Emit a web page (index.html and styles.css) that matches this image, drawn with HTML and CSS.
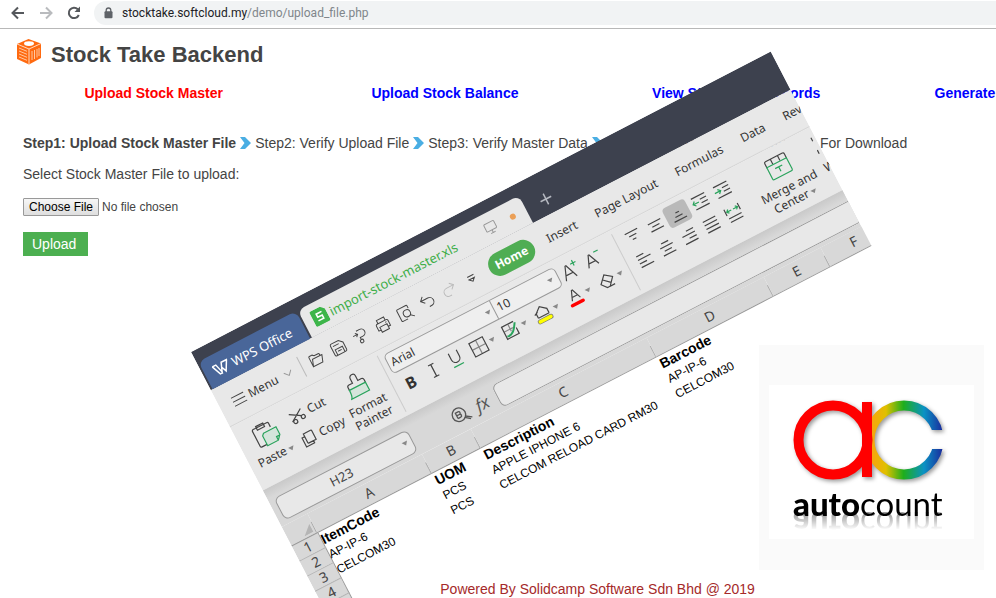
FILE: index.html
```html
<!DOCTYPE html>
<html lang="en">
<head>
    <meta charset="UTF-8">
    <meta name="viewport" content="width=device-width, initial-scale=1.0">
    <title>Stock Take Backend</title>
    <link rel="stylesheet" href="styles.css">
</head>
<body>
    <!-- Browser bar -->
    <div class="browser-bar">
        <button class="bar-btn" aria-label="Back"><svg width="16" height="16" viewBox="0 0 16 16"><path d="M14 8H3M8 2.500L2.500 8L8 13.500"/></svg></button>
        <button class="bar-btn off" aria-label="Forward"><svg width="16" height="16" viewBox="0 0 16 16"><path d="M2 8H13M8 2.500L13.500 8L8 13.500"/></svg></button>
        <button class="bar-btn" aria-label="Reload"><svg width="16" height="16" viewBox="0 0 16 16"><path d="M12.800 10A5.200 5.200 0 1 1 11.800 4.300"/><path class="solid" d="M14 1.500V7H8.500z"/></svg></button>
        <div class="address" role="textbox" aria-label="Address">
            <svg width="9" height="12" viewBox="0 0 9 12"><path d="M2.200 5V3.300a2.300 2.300 0 0 1 4.600 0V5" fill="none" stroke="#5f6368" stroke-width="1.300"/><rect x="0.500" y="4.300" width="8" height="7" rx="1" fill="#5f6368"/></svg>
            <span>stocktake.softcloud.my<span class="path">/demo/upload_file.php</span></span>
        </div>
    </div>

    <div class="page">
        <header>
            <svg class="logo" width="26" height="26" viewBox="0 0 26 26">
                <path d="M12.500 0L25 4.500V19L13 25.500L1 20V5z" fill="#ff6a10"/>
                <path d="M1 5L13 10L25 4.500M13 10V25.500" stroke="#ffd9bf" stroke-width="1" fill="none"/>
                <ellipse cx="13" cy="4.600" rx="5" ry="2.300" fill="#fff"/>
                <path d="M3 9l8 3.300M3 12l8 3.300M3 15l8 3.300M3 18l8 3.300" stroke="#ffc9a3" stroke-width="1"/>
                <path d="M16 12v9M18.500 11v9M21 10v8.500M23 9v8" stroke="#ffc9a3" stroke-width="1"/>
            </svg>
            <h1>Stock Take Backend</h1>
        </header>
        <nav>
            <a href="#" class="active">Upload Stock Master</a>
            <a href="#">Upload Stock Balance</a>
            <a href="#">View Stock Take Records</a>
            <a href="#">Generate File For Download</a>
        </nav>
        <main>
            <div class="steps">
                <b>Step1: Upload Stock Master File</b>
                <svg width="11" height="12" viewBox="0 0 11 12"><path d="M0 0H5L11 6L5 12H0L4.500 6z"/></svg>
                <span>Step2: Verify Upload File</span>
                <svg width="11" height="12" viewBox="0 0 11 12"><path d="M0 0H5L11 6L5 12H0L4.500 6z"/></svg>
                <span>Step3: Verify Master Data</span>
                <svg width="11" height="12" viewBox="0 0 11 12"><path d="M0 0H5L11 6L5 12H0L4.500 6z"/></svg>
                <span>Step4: Generate Master Data File For Download</span>
            </div>
            <form>
                <label for="stockFile">Select Stock Master File to upload:</label>
                <input type="file" id="stockFile">
                <button type="button" class="upload-btn">Upload</button>
            </form>
        </main>
        <footer>Powered By Solidcamp Software Sdn Bhd @ 2019</footer>
    </div>

    <!-- Tilted spreadsheet window -->
    <div class="sheet">
        <div class="title-bar">
            <div class="app-tab">
                <svg width="18" height="14" viewBox="0 0 18 14"><path d="M1 2H5L7.500 11L11 2H17L11.500 12L9 6M1 2L5 12H8" fill="none" stroke="#fff" stroke-width="1.500"/></svg>
                <span>WPS Office</span>
            </div>
            <div class="file-tab">
                <svg width="16" height="17" viewBox="0 0 16 17"><path d="M2 0H12L16 4V15a2 2 0 0 1-2 2H2a2 2 0 0 1-2-2V2a2 2 0 0 1 2-2z" fill="#3db54a"/><path d="M11.500 5H5.500V8.500H10.500V12H4.500" fill="none" stroke="#fff" stroke-width="1.600"/></svg>
                <span class="file-name">import-stock-master.xls</span>
                <svg width="13" height="13" viewBox="0 0 13 13" fill="none" stroke="#999"><rect x="1" y="1" width="11" height="8" rx="1"/><path d="M6.500 9v2.500M4 12h5"/></svg>
                <i class="dot"></i>
            </div>
            <button class="new-tab" aria-label="New tab"><svg width="13" height="13" viewBox="0 0 13 13"><path d="M6.500 0.500V12.500M0.500 6.500H12.500" stroke="#b5b8c0" stroke-width="1.500"/></svg></button>
        </div>

        <div class="menu-bar">
            <button class="menu-btn">
                <svg width="14" height="12" viewBox="0 0 14 12"><path d="M0 1.500H14M0 6H14M0 10.500H14" stroke="#444"/></svg>
                <span>Menu</span>
                <svg class="menu-arrow" width="9" height="6" viewBox="0 0 9 6"><path d="M0.500 0.500L4.500 5L8.500 0.500" fill="none" stroke="#999"/></svg>
            </button>
            <div class="quick">
                <button aria-label="Open"><svg width="16" height="16" viewBox="0 0 16 16"><path d="M2 13.500V3.500a1 1 0 0 1 1-1H6L7.500 4H12a1 1 0 0 1 1 1V6.500M2 13.500L4.500 6.500H15L12.500 13.500z"/></svg></button>
                <button aria-label="Save"><svg width="16" height="16" viewBox="0 0 16 16"><path d="M1.500 3a1.500 1.500 0 0 1 1.500-1.500H11L14.500 5V13a1.500 1.500 0 0 1-1.500 1.500H3A1.500 1.500 0 0 1 1.500 13zM4 14.500V8.500H12V14.500M3.500 4.500H10M6 11H10"/></svg></button>
                <button aria-label="Export"><svg width="16" height="16" viewBox="0 0 16 16"><path d="M1 5H6M4 3L6 5L4 7M6 1.500H10A3.700 3.700 0 0 1 10 9H7V12M7 9V12"/><circle cx="7" cy="13" r="1.800"/></svg></button>
                <button aria-label="Print"><svg width="16" height="16" viewBox="0 0 16 16"><path d="M4 5V1.500H12V5M4 12H1.500V6.500A1.500 1.500 0 0 1 3 5H13A1.500 1.500 0 0 1 14.500 6.500V12H12M4 9H12V14.500H4zM11 7h1.500"/></svg></button>
                <button aria-label="Print preview"><svg width="16" height="16" viewBox="0 0 16 16"><path d="M13 5V2.500A1 1 0 0 0 12 1.500H2.500A1 1 0 0 0 1.500 2.500V13.500A1 1 0 0 0 2.500 14.500H8M12 12L15.500 15"/><circle cx="9.500" cy="9" r="3.600"/></svg></button>
                <button aria-label="Undo"><svg width="16" height="16" viewBox="0 0 16 16"><path d="M5.500 1.500L2 5L5.500 8.500M2 5H10A4 4 0 0 1 10 13.500H8"/></svg></button>
                <button aria-label="Redo" class="off"><svg width="16" height="16" viewBox="0 0 16 16"><path d="M10.500 1.500L14 5L10.500 8.500M14 5H6A4 4 0 0 0 6 13.500H8"/></svg></button>
                <button aria-label="More"><svg width="16" height="16" viewBox="0 0 16 16"><path d="M4.500 5H11.500M5 8L8 11L11 8z"/></svg></button>
            </div>
            <button class="ribbon-tab active">Home</button>
            <button class="ribbon-tab">Insert</button>
            <button class="ribbon-tab">Page Layout</button>
            <button class="ribbon-tab">Formulas</button>
            <button class="ribbon-tab">Data</button>
            <button class="ribbon-tab">Review</button>
        </div>

        <div class="ribbon">
            <div class="group clipboard">
                <button class="tall paste">
                    <svg width="28" height="28" viewBox="0 0 28 28"><path d="M10 24H4.500A1.500 1.500 0 0 1 3 22.500V6A1.500 1.500 0 0 1 4.500 4.500H19.500A1.500 1.500 0 0 1 21 6V10M8 3H16V7H8z"/><path class="green" d="M12 12.500H26V21L22 25.500H10V14.500zM22 25.500V21.500H26"/></svg>
                    <span>Paste <i class="arrow"></i></span>
                </button>
                <div class="stack">
                    <button><svg width="16" height="16" viewBox="0 0 16 16"><path d="M1 3.500L12 10.500M1 12L14 3.500"/><circle cx="13" cy="12" r="2"/><circle cx="4" cy="13" r="2"/></svg>Cut</button>
                    <button><svg width="16" height="16" viewBox="0 0 16 16"><path d="M5 1.500H13A1 1 0 0 1 14 2.500V12H6A1 1 0 0 1 5 11zM5 4.500H2V14.500H11V12"/></svg>Copy</button>
                </div>
                <button class="tall painter">
                    <svg width="24" height="26" viewBox="0 0 24 26"><path d="M3 14V11A2 2 0 0 1 5 9H9V4A3 3 0 0 1 15 4V9H19A2 2 0 0 1 21 11V14"/><path class="green" d="M3 14H21V23H1C3 21 3 18 3 14z"/></svg>
                    <span>Format<br>Painter</span>
                </button>
            </div>
            <div class="group font">
                <div class="row">
                    <div class="combo">
                        <select class="font-name" aria-label="Font"><option>Arial</option></select><i class="arrow"></i>
                        <select class="font-size" aria-label="Font size"><option>10</option></select><i class="arrow"></i>
                    </div>
                    <button class="tool" aria-label="Grow font"><svg width="20" height="20" viewBox="0 0 20 20"><path d="M2 18L7.500 4H8.500L14 18M4 13H12"/><path class="green" d="M13 4.500H19M16 1.500V7.500"/></svg></button>
                    <button class="tool" aria-label="Shrink font"><svg width="20" height="20" viewBox="0 0 20 20"><path d="M3 17L8 5H9L14 17M5 13H12"/><path class="green" d="M14 4.500H19"/></svg></button>
                </div>
                <div class="row">
                    <button class="tool bold">B</button>
                    <button class="tool" aria-label="Italic"><svg width="16" height="18" viewBox="0 0 16 18"><path d="M5 2.500H11M5 15.500H11M8 2.500V15.500"/></svg></button>
                    <button class="tool" aria-label="Underline"><svg width="16" height="18" viewBox="0 0 16 18"><path d="M3.500 1V8A4.500 4.500 0 0 0 12.500 8V1"/><path class="green" d="M2.500 16H13.500"/></svg></button>
                    <button class="tool split" aria-label="Borders"><svg width="18" height="18" viewBox="0 0 18 18"><path class="thin" d="M9 2V16M2 9H16"/><path d="M1.500 1.500H16.500V16.500H1.500z"/></svg><i class="arrow"></i></button>
                    <button class="tool split" aria-label="Cell style"><svg width="18" height="18" viewBox="0 0 18 18"><path class="thin" d="M9 2V10M2 7.500H12"/><path d="M15 2H2V15.500H15V9"/><path class="green thick" d="M3 13C9 14 12 10 16 3.500"/></svg><i class="arrow"></i></button>
                    <button class="tool split" aria-label="Fill color"><svg width="18" height="18" viewBox="0 0 18 18"><path d="M3 11V6L9 1L15 6V11M1 7L5 5M3 11H15"/><path d="M3 15H15" stroke="#777" stroke-width="5" stroke-linecap="round"/><path d="M3 15H15" stroke="#ff0" stroke-width="3.500" stroke-linecap="round"/></svg><i class="arrow"></i></button>
                    <button class="tool split" aria-label="Font color"><svg width="18" height="18" viewBox="0 0 18 18"><path d="M5 11.500L9 1.500H10L14 11.500M6.500 8H12.500"/><path d="M3 15.500H15" stroke="#f00" stroke-width="3.500" stroke-linecap="round"/></svg><i class="arrow"></i></button>
                    <button class="tool split" aria-label="Clear"><svg width="18" height="18" viewBox="0 0 18 18"><path d="M2 10L9 2.500L16 8L9.500 15.500H6.500zM5.500 6.500L12 12.500M9 15.500H15"/></svg><i class="arrow"></i></button>
                </div>
            </div>
            <div class="group align">
                <button aria-label="Top align"><svg width="18" height="18" viewBox="0 0 18 18"><path d="M2 3.500H16M5 7.500H13M7 11.500H11"/></svg></button>
                <button aria-label="Middle align"><svg width="18" height="18" viewBox="0 0 18 18"><path d="M2 5.500H16M5 9.500H13M2 13.500H16"/></svg></button>
                <button aria-label="Bottom align" class="on"><svg width="18" height="18" viewBox="0 0 18 18"><path d="M7 7.500H11M5 11.500H13M2 15.500H16"/></svg></button>
                <button aria-label="Decrease indent"><svg width="18" height="18" viewBox="0 0 18 18"><path d="M2 2.500H17M10 6.500H17M10 10.500H17M2 14.500H17"/><path class="green" d="M8 8.500H1.500M4 6L1.500 8.500L4 11"/></svg></button>
                <button aria-label="Increase indent"><svg width="18" height="18" viewBox="0 0 18 18"><path d="M2 2.500H17M10 6.500H17M10 10.500H17M2 14.500H17"/><path class="green" d="M1 8.500H7.500M5 6L7.500 8.500L5 11"/></svg></button>
                <button aria-label="Align left"><svg width="18" height="18" viewBox="0 0 18 18"><path d="M2 2.500H10M2 6.500H16M2 10.500H10M2 14.500H16"/></svg></button>
                <button aria-label="Center"><svg width="18" height="18" viewBox="0 0 18 18"><path d="M5 2.500H13M2 6.500H16M5 10.500H13M2 14.500H16"/></svg></button>
                <button aria-label="Align right"><svg width="18" height="18" viewBox="0 0 18 18"><path d="M8 2.500H16M2 6.500H16M8 10.500H16M2 14.500H16"/></svg></button>
                <button aria-label="Justify"><svg width="18" height="18" viewBox="0 0 18 18"><path d="M2 2.500H16M2 6.500H16M2 10.500H16M2 14.500H16"/></svg></button>
                <button aria-label="Distribute"><svg width="18" height="18" viewBox="0 0 18 18"><path d="M1.500 1V8M16.500 1V8M2 11.500H16M2 15.500H16"/><path class="green" d="M8 4.500H3M5 2.500L3 4.500L5 6.500M10 4.500H15M13 2.500L15 4.500L13 6.500"/></svg></button>
            </div>
            <button class="tall merge">
                <svg width="26" height="26" viewBox="0 0 26 26"><path d="M2 9V4A1.500 1.500 0 0 1 3.500 2.500H22.500A1.500 1.500 0 0 1 24 4V9M9 3V8M17 3V8"/><path class="green" d="M2 8.500H24V21A1.500 1.500 0 0 1 22.500 22.500H3.500A1.500 1.500 0 0 1 2 21zM9 13H17M13 13V18"/></svg>
                <span>Merge and<br>Center <i class="arrow"></i></span>
            </button>
            <button class="tall wrap">
                <svg width="26" height="26" viewBox="0 0 26 26"><path d="M2 2V6M2 16V20"/></svg>
                <span>Wrap</span>
            </button>
        </div>

        <div class="formula-bar">
            <div class="name-box">
                <input type="text" value="H23" aria-label="Name box"><i class="arrow"></i>
            </div>
            <svg class="find" width="20" height="18" viewBox="0 0 20 18" fill="none" stroke="#555" stroke-width="1.300"><circle cx="8" cy="8" r="6.800"/><path d="M5.500 11V5H8.500A1.500 1.500 0 0 1 8.500 8H5.500M8.500 8A1.500 1.500 0 0 1 8.500 11H5.500M13 12L19 16M12 13L17 17"/></svg>
            <span class="fx">fx</span>
            <input type="text" class="formula" aria-label="Formula">
        </div>

        <table>
            <colgroup>
                <col class="c-num"><col class="c-a"><col class="c-b"><col class="c-c"><col class="c-d"><col class="c-e"><col class="c-f">
            </colgroup>
            <thead>
                <tr>
                    <th class="corner"><svg width="10" height="9" viewBox="0 0 10 9"><path d="M10 0V9H0z" fill="#b5b5b5"/></svg></th>
                    <th>A</th><th>B</th><th>C</th><th>D</th><th>E</th><th>F</th>
                </tr>
            </thead>
            <tbody>
                <tr class="names"><th>1</th><td>ItemCode</td><td>UOM</td><td>Description</td><td>Barcode</td><td></td><td></td></tr>
                <tr><th>2</th><td>AP-IP-6</td><td>PCS</td><td>APPLE IPHONE 6</td><td>AP-IP-6</td><td></td><td></td></tr>
                <tr><th>3</th><td>CELCOM30</td><td>PCS</td><td>CELCOM RELOAD CARD RM30</td><td>CELCOM30</td><td></td><td></td></tr>
                <tr><th>4</th><td></td><td></td><td></td><td></td><td></td><td></td></tr>
                <tr><th></th><td></td><td></td><td></td><td></td><td></td><td></td></tr>
            </tbody>
        </table>
    </div>

    <!-- AutoCount card -->
    <div class="partner">
        <div class="partner-inner">
            <svg width="160" height="88" viewBox="0 0 160 88">
                <defs>
                    <linearGradient id="rainbow" gradientUnits="userSpaceOnUse" x1="76" y1="0" x2="152" y2="0">
                        <stop offset="0" stop-color="#ff9c12"/>
                        <stop offset="0.250" stop-color="#e0c000"/>
                        <stop offset="0.480" stop-color="#1fae1c"/>
                        <stop offset="0.750" stop-color="#0a92c4"/>
                        <stop offset="1" stop-color="#1b2a9c"/>
                    </linearGradient>
                    <clipPath id="gap"><path d="M0 0H160V32H112V51H160V88H0z"/></clipPath>
                </defs>
                <g class="mark">
                    <g clip-path="url(#gap)"><circle cx="113" cy="42" r="34.500" fill="none" stroke="url(#rainbow)" stroke-width="10"/></g>
                    <circle cx="42" cy="42" r="34.500" fill="none" stroke="#f00" stroke-width="10"/>
                    <path d="M71 4H81V79H71z" fill="#f00"/>
                </g>
            </svg>
            <div class="brand"><b>auto</b>count</div>
        </div>
    </div>
</body>
</html>
```
FILE: styles.css
```css
* {
    box-sizing: border-box;
}

html, body {
    height: 100%;
}

body {
    margin: 0;
    display: flex;
    flex-direction: column;
    position: relative;
    overflow: hidden;
    background: #fff;
    color: #444;
    font: 14px/20px 'Liberation Sans', Arial, sans-serif;
}

button {
    border: none;
    background: none;
    padding: 0;
    font: inherit;
    color: inherit;
}

/* Browser bar */
.browser-bar {
    display: flex;
    align-items: center;
    height: 29px;
    flex: none;
    padding: 0 0 3px 10px;
    border-bottom: 1px solid #b8b8b8;
}

.bar-btn {
    width: 28px;
    height: 16px;
    text-align: left;
}

.bar-btn svg {
    display: block;
    fill: none;
    stroke: #55585c;
    stroke-width: 2;
}

.bar-btn.off svg {
    stroke: #b9bbbe;
}

.bar-btn .solid {
    fill: #55585c;
    stroke: none;
}

.address {
    display: flex;
    align-items: center;
    gap: 9px;
    flex: 1;
    height: 24px;
    padding-left: 10px;
    border-radius: 12px 0 0 12px;
    background: #f1f3f4;
    color: #202124;
    font: 12px/24px Roboto, 'Open Sans', sans-serif;
}

.address .path {
    color: #80868b;
}

/* Page */
.page {
    flex: 1;
    display: flex;
    flex-direction: column;
    width: 120%;
}

header {
    display: flex;
    align-items: center;
    gap: 9px;
    padding: 10px 16px 0;
}

header .logo {
    margin-bottom: 6px;
}

h1 {
    margin: 0;
    font-size: 22px;
    line-height: 32px;
}

nav {
    display: grid;
    grid-template-columns: repeat(4, 1fr);
    margin-top: 12px;
    padding: 0 22px 0 8px;
    text-align: center;
}

nav a {
    color: #00f;
    font-weight: bold;
    text-decoration: none;
}

nav a.active {
    color: #f00;
}

main {
    padding: 30px 24px 0 23px;
}

.steps {
    display: flex;
    align-items: center;
    gap: 4px;
    white-space: nowrap;
}

.steps svg {
    fill: #4aaee3;
}

form {
    display: flex;
    flex-direction: column;
    align-items: flex-start;
    margin-top: 11px;
}

input[type="file"] {
    margin: 14px 0 16px;
    font: 12px/18px 'Liberation Sans', Arial, sans-serif;
    color: #444;
}

input[type="file"]::file-selector-button {
    height: 18px;
    margin-right: 3px;
    padding: 0 5px;
    border: 1px solid #999;
    border-radius: 1px;
    background: linear-gradient(#f6f6f6, #dedede);
    font: inherit;
    line-height: 16px;
    color: #000;
}

.upload-btn {
    height: 24px;
    padding: 0 12px 0 9px;
    background: #4caf50;
    color: #fff;
}

footer {
    margin-top: auto;
    line-height: 18px;
    text-align: center;
    color: #a52a2a;
}

/* Spreadsheet window */
.sheet {
    position: absolute;
    left: 191px;
    top: 352px;
    width: 653px;
    overflow: hidden;
    transform: rotate(-27.4deg);
    transform-origin: 0 0;
    color: #333;
    font: 12px/14px 'Noto Sans', 'Open Sans', sans-serif;
    white-space: nowrap;
}

.sheet svg {
    display: block;
    flex: none;
}

.title-bar {
    display: flex;
    align-items: flex-end;
    gap: 2px;
    height: 43px;
    padding-left: 2px;
    background: #3d414e;
}

.app-tab,
.file-tab {
    display: flex;
    align-items: center;
    height: 31px;
    border-radius: 7px 7px 0 0;
}

.app-tab {
    width: 110px;
    padding-left: 9px;
    gap: 3px;
    background: #496699;
    color: #fff;
    font-size: 13px;
}

.file-tab {
    width: 249px;
    padding: 0 12px 0 9px;
    gap: 3px;
    background: #e8e8e8;
    color: #3fae49;
    font-size: 13px;
}

.file-name {
    flex: 1;
}

.dot {
    width: 6px;
    height: 6px;
    margin-left: 12px;
    border-radius: 50%;
    background: #eb9f56;
}

.new-tab {
    height: 31px;
    margin-left: 14px;
}

.menu-bar {
    display: flex;
    align-items: center;
    height: 42px;
    background: #e8e8e8;
    border-bottom: 1px solid #d6d6d6;
}

.menu-bar > * {
    flex: none;
}

.menu-btn {
    display: flex;
    align-items: center;
    gap: 4px;
    width: 92px;
    height: 22px;
    padding-left: 14px;
    border-right: 1px solid #bbb;
}

.menu-arrow {
    margin-left: 4px;
}

.quick {
    display: flex;
    padding: 0 8px 0 3px;
}

.quick button {
    width: 25px;
}

.quick svg {
    margin: auto;
    fill: none;
    stroke: #444;
}

.quick .off svg {
    stroke: #bbb;
}

.ribbon-tab {
    margin-right: 21px;
}

.ribbon-tab.active {
    width: 50px;
    height: 24px;
    margin-right: 15px;
    border-radius: 12px;
    background: #4fad53;
    color: #fff;
    font-weight: bold;
}

.ribbon {
    display: flex;
    height: 71px;
    padding-top: 4px;
    background: #e8e8e8;
}

.ribbon svg {
    fill: none;
    stroke: #444;
    stroke-width: 1.2;
}

.ribbon .green {
    stroke: #2aa35c;
    fill: none;
}

.ribbon .thick {
    stroke-width: 2;
}

.ribbon .thin {
    stroke: #888;
}

.ribbon .clipboard .green {
    fill: #d5e5db;
}

.arrow {
    display: inline-block;
    width: 0;
    height: 0;
    border: 3px solid transparent;
    border-top: 4px solid #888;
    border-bottom: none;
    vertical-align: middle;
}

.group {
    height: 63px;
    border-right: 1px solid #ccc;
    flex: none;
}

.clipboard {
    display: flex;
    width: 164px;
}

.tall {
    display: flex;
    flex-direction: column;
    align-items: center;
    flex: none;
    gap: 3px;
    padding-top: 4px;
    line-height: 14px;
}

.paste {
    width: 57px;
}

.stack {
    display: flex;
    flex-direction: column;
    gap: 10px;
    padding-top: 8px;
}

.stack button {
    display: flex;
    align-items: center;
    gap: 4px;
    height: 16px;
}

.painter {
    margin-left: 7px;
}

.font {
    display: flex;
    flex-direction: column;
    width: 264px;
    padding: 2px 0 0 5px;
    gap: 4px;
}

.row {
    display: flex;
    align-items: center;
    height: 22px;
}

.combo {
    display: flex;
    align-items: center;
    width: 192px;
    height: 22px;
    padding-right: 5px;
    border: 1px solid #999;
    border-radius: 5px;
    background: #efefef;
}

select {
    appearance: none;
    border: none;
    background: none;
    padding: 0 3px;
    font: inherit;
    color: inherit;
}

.font-name {
    width: 112px;
}

.font-size {
    width: 62px;
    height: 20px;
    margin-left: 3px;
    border-left: 1px solid #999;
}

.tool {
    display: flex;
    align-items: center;
    justify-content: center;
    width: 25px;
}

.bold {
    font-size: 16px;
    font-weight: bold;
}

.split {
    width: 36px;
    gap: 3px;
}

.align {
    display: grid;
    grid-template-columns: repeat(5, 25px);
    align-content: start;
    gap: 4px 0;
    padding: 1px 0 0 5px;
    border: none;
}

.align button {
    height: 22px;
    border-radius: 4px;
}

.align .on {
    background: #b9b9b9;
}

.align svg {
    margin: auto;
}

.merge {
    width: 64px;
    margin-left: 17px;
}

.wrap {
    align-items: flex-start;
    margin-left: 8px;
}

.formula-bar {
    display: flex;
    align-items: center;
    height: 41px;
    padding: 7px 0 0 6px;
    background: linear-gradient(#c9c9c9, #d8d8d8 10px);
}

.name-box,
.formula {
    height: 25px;
    border: 1px solid #999;
    border-radius: 6px;
    background: #e8e8e8;
}

.name-box {
    display: flex;
    align-items: center;
    width: 150px;
    padding-right: 4px;
}

.name-box input {
    flex: 1;
    min-width: 0;
    border: none;
    background: none;
    text-align: center;
    font: inherit;
    font-size: 13px;
    color: #444;
}

.find {
    margin-left: 45px;
}

.fx {
    margin: 0 9px 0 7px;
    font-size: 17px;
    font-style: italic;
    color: #555;
}

.formula {
    flex: 1;
    min-width: 0;
    border-right: none;
    border-radius: 6px 0 0 6px;
}

table {
    width: 671px;
    table-layout: fixed;
    border-collapse: collapse;
}

.c-num { width: 29px; }
.c-a { width: 129px; }
.c-b { width: 55px; }
.c-c { width: 198px; }
.c-d { width: 132px; }
.c-e { width: 64px; }
.c-f { width: 64px; }

th, td {
    height: 17px;
    padding: 0;
}

th {
    background: #d8d8d8;
    font-size: 14px;
    font-weight: normal;
    line-height: 16px;
    color: #444;
}

thead th {
    height: 21px;
    border-bottom: 1px solid #999;
    background: linear-gradient(#aaa, #aaa) right bottom / 1px 12px no-repeat #d8d8d8;
}

.corner svg {
    margin: 8px 0 0 16px;
}

tbody th {
    border-right: 1px solid #999;
    border-bottom: 1px solid #b5b5b5;
}

td {
    color: #000;
    font: 12px/16px 'Liberation Sans', Arial, sans-serif;
}

.names td {
    font-size: 14px;
    font-weight: bold;
}

/* Partner card */
.partner {
    position: absolute;
    right: 12px;
    top: 345px;
    padding: 40px 10px 31px;
    background: #fafafa;
}

.partner-inner {
    width: 205px;
    height: 154px;
    padding: 13px 21px 0 22px;
    background: #fff;
}

.partner svg {
    display: block;
}

.mark {
    filter: drop-shadow(2px 2px 2px rgba(0, 0, 0, 0.4));
}

.brand {
    padding-left: 2px;
    font: 33px/34px Lato, sans-serif;
    color: #000;
    -webkit-box-reflect: below -12px linear-gradient(transparent 35%, rgba(0, 0, 0, 0.5));
}

.brand b {
    font-weight: 900;
}
```
